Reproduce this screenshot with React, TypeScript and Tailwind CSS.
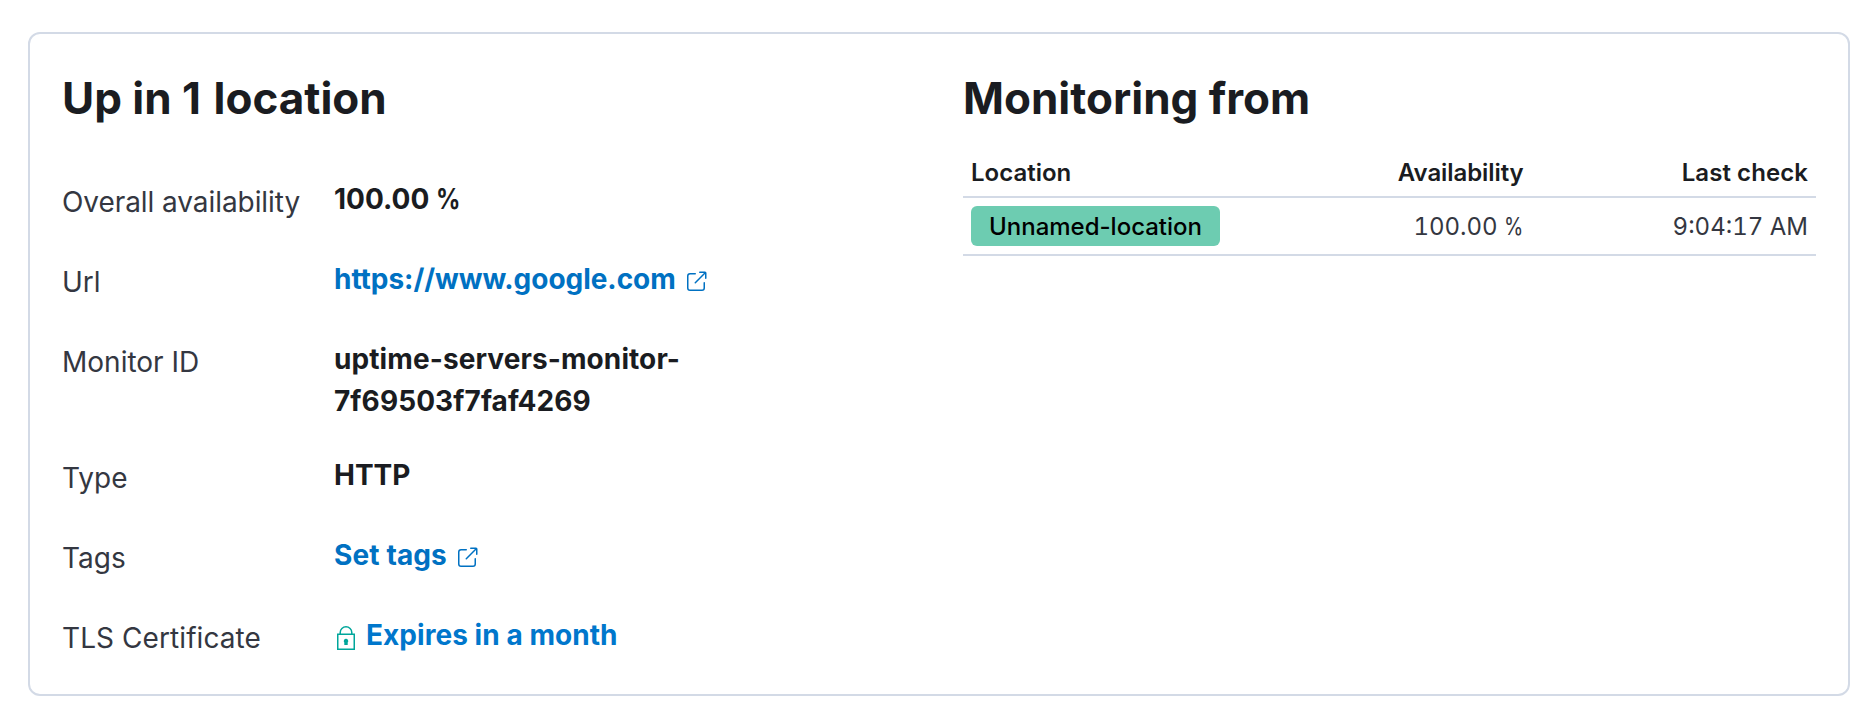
import type { ReactNode } from 'react';

function PopoutIcon() {
  return (
    <svg viewBox="0 0 16 16" className="ml-2 mt-[12px] size-6 shrink-0 fill-current" aria-hidden="true">
      <path d="M13 8.5a.5.5 0 1 1 1 0V12a2 2 0 0 1-2 2H4a2 2 0 0 1-2-2V4a2 2 0 0 1 2-2h3.5a.5.5 0 0 1 0 1H4a1 1 0 0 0-1 1v8a1 1 0 0 0 1 1h8a1 1 0 0 0 1-1V8.5zm-5.12.339a.5.5 0 1 1-.706-.707L13.305 2H10.5a.5.5 0 1 1 0-1H14a1 1 0 0 1 1 1v3.5a.5.5 0 1 1-1 0V2.72L7.88 8.838z" />
    </svg>
  );
}

function LockIcon() {
  return (
    <svg viewBox="0 0 24 24" className="mt-[12px] mr-2 size-6 shrink-0 text-[#00a69b]" aria-hidden="true">
      <path d="M6.2 8V6.5a5.8 5.7 0 0 1 11.6 0V8" fill="none" stroke="currentColor" strokeWidth="1.5" />
      <path d="M3.75 8.25h16.5v15H3.75z" fill="none" stroke="currentColor" strokeWidth="1.5" />
      <path d="M12 12.8a2.3 2.3 0 0 1 1.7 3.8v2.4h-3.4v-2.4A2.3 2.3 0 0 1 12 12.8z" fill="currentColor" />
    </svg>
  );
}

function Row({ label, labelClass = '', children }: { label: string; labelClass?: string; children: ReactNode }) {
  return (
    <div className="mb-8 flex">
      <dt className={`w-[272px] text-[28px] leading-[48px] text-[#343741] ${labelClass}`}>{label}</dt>
      <dd className="w-[420px] text-[28px] leading-[42px] font-bold text-[#1a1c21]">{children}</dd>
    </div>
  );
}

export default function App() {
  return (
    <main className="h-[706px] bg-white px-[28px] pt-[32px] font-['Inter',sans-serif] tracking-normal">
      <section className="flex h-[664px] w-[1822px] rounded-[12px] border-2 border-[#d3dae6] pt-[32px] pl-[32px]">
        <div className="w-[901px]">
          <h3 className="text-[44px] leading-[64px] font-bold text-[#1a1c21]">
            Up in 1 <span className="ml-[2px]">location</span>
          </h3>
          <dl className="pt-[48px]">
            <Row label="Overall availability" labelClass="tracking-[-0.07px]">
              100.00 <span className="inline-block origin-left scale-x-[0.86]">%</span>
            </Row>
            <Row label="Url">
              <a className="flex text-[#0071c2]"><span className="tracking-[-0.04px]">https://www.google.com</span><PopoutIcon /></a>
            </Row>
            <Row label="Monitor ID">
              <span className="tracking-[0.09px]">uptime-servers-monitor-<br />7f69503f7faf4269</span>
            </Row>
            <Row label="Type">HTTP</Row>
            <Row label="Tags">
              <a className="flex text-[#0071c2]"><span className="tracking-[0.12px]">Set tags</span><PopoutIcon /></a>
            </Row>
            <Row label="TLS Certificate" labelClass="tracking-[0.08px]">
              <a className="flex text-[#0077cc]"><LockIcon /><span className="tracking-[0.05px]">Expires in a month</span></a>
            </Row>
          </dl>
        </div>
        <div className="w-[853px]">
          <h3 className="text-[44px] leading-[64px] font-bold text-[#1a1c21]">Monitoring from</h3>
          <table className="mt-[15px] w-full table-fixed border-collapse text-[24px] text-[#343741]">
            <thead>
              <tr className="h-[52px] border-b-2 border-[#d3dae6] leading-[36px] text-[#1a1c21]">
                <th className="px-2 pt-1 text-left font-semibold">Location</th>
                <th className="px-2 pt-1 text-right font-semibold tracking-[-0.08px]">Availability</th>
                <th className="px-2 pt-1 text-right font-semibold tracking-[0.08px]">Last check</th>
              </tr>
            </thead>
            <tbody>
              <tr className="h-[58px] border-b-2 border-[#d3dae6] leading-[36px] tabular-nums">
                <td className="px-2">
                  <span className="block h-[40px] w-[249px] rounded-[6px] bg-[#6dccb1] text-center leading-[42px] font-medium text-black normal-nums">Unnamed-location</span>
                </td>
                <td className="px-2 pt-[2px] text-right">100.00 <span className="-mr-1 inline-block origin-left scale-x-[0.82] normal-nums">%</span></td>
                <td className="px-2 pt-[2px] text-right">9:04:17 AM</td>
              </tr>
            </tbody>
          </table>
        </div>
      </section>
    </main>
  );
}
